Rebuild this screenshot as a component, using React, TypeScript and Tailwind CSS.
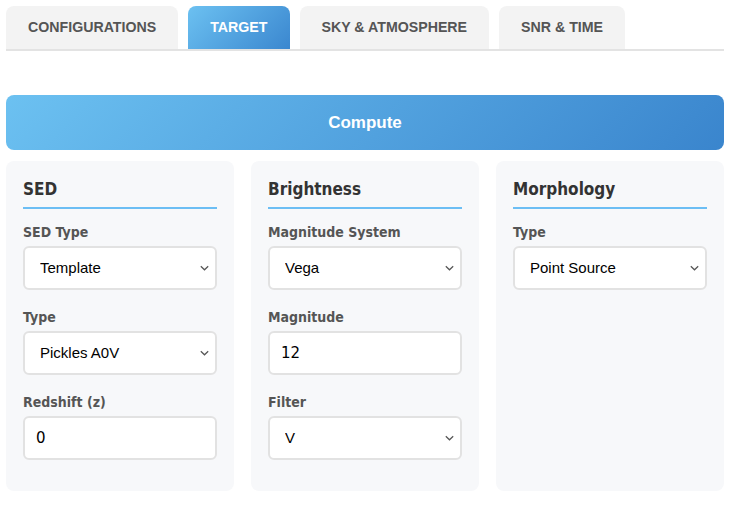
import { useState } from "react";

const TABS = ["CONFIGURATIONS", "TARGET", "SKY & ATMOSPHERE", "SNR & TIME"];

const headFont = {
  fontFamily: '"DejaVu Sans Condensed", "DejaVu Sans", Verdana, sans-serif',
};

function Chevron() {
  return (
    <svg
      className="pointer-events-none absolute right-[8px] top-1/2 -translate-y-1/2"
      width="9"
      height="6"
      viewBox="0 0 9 6"
      fill="none"
    >
      <path d="M0.8 1.2 L4.5 4.8 L8.2 1.2" stroke="#555" strokeWidth="1.2" />
    </svg>
  );
}

function SelectField({ label, value, options }: { label: string; value: string; options: string[] }) {
  const [v, setV] = useState(value);
  return (
    <div className="flex flex-col">
      <label className="mb-[5px] text-[14px] leading-[17px] font-bold text-[#555]" style={headFont}>
        {label}
      </label>
      <div className="relative">
        <select
          value={v}
          onChange={(e) => setV(e.target.value)}
          className="h-[44px] w-full appearance-none rounded-md border-2 border-[#e2e2e2] bg-white pl-[15px] text-[15px] text-black outline-none font-['Liberation_Sans',Arial,sans-serif]"
        >
          {options.map((o) => (
            <option key={o}>{o}</option>
          ))}
        </select>
        <Chevron />
      </div>
    </div>
  );
}

function InputField({ label, value }: { label: string; value: string }) {
  const [v, setV] = useState(value);
  return (
    <div className="flex flex-col">
      <label className="mb-[5px] text-[14px] leading-[17px] font-bold text-[#555]" style={headFont}>
        {label}
      </label>
      <input
        value={v}
        onChange={(e) => setV(e.target.value)}
        className="h-[44px] w-full rounded-md border-2 border-[#e2e2e2] bg-white px-[11px] text-[15px] text-black outline-none font-['DejaVu_Sans',Verdana,sans-serif]"
      />
    </div>
  );
}

function Card({ title, children }: { title: string; children: React.ReactNode }) {
  return (
    <div className="rounded-lg bg-[#f7f8fa] px-[17px] pt-[17px] pb-[31px]">
      <h3
        className="mb-[15px] border-b-2 border-[#6cbef4] pb-[7px] text-[17px] leading-[22px] font-bold text-[#333]"
        style={headFont}
      >
        {title}
      </h3>
      <div className="flex flex-col gap-[19px]">{children}</div>
    </div>
  );
}

export default function App() {
  const [tab, setTab] = useState("TARGET");

  return (
    <div className="min-h-[525px] bg-white px-[6px] pt-[6px]">
      <div className="flex gap-[10px] border-b-2 border-[#e3e3e3]">
        {TABS.map((t) => (
          <button
            key={t}
            onClick={() => setTab(t)}
            className={
              t === tab
                ? "h-[43px] rounded-t-lg bg-linear-135 from-[#6cc1f1] to-[#3b87cf] px-[22px] text-[14.2px] font-bold text-white font-['Liberation_Sans',Arial,sans-serif]"
                : "h-[43px] rounded-t-lg bg-[#f3f3f3] px-[22px] text-[14.2px] font-bold text-[#555] font-['Liberation_Sans',Arial,sans-serif]"
            }
          >
            {t}
          </button>
        ))}
      </div>

      <button className="mt-[44px] h-[55px] w-full rounded-lg bg-linear-135 from-[#6cc1f1] to-[#3a85cd] text-[17px] font-bold text-white font-['Liberation_Sans',Arial,sans-serif]">
        Compute
      </button>

      <div className="mt-[11px] grid grid-cols-3 gap-[17px]">
        <Card title="SED">
          <SelectField label="SED Type" value="Template" options={["Template", "Blackbody", "Power Law"]} />
          <SelectField label="Type" value="Pickles A0V" options={["Pickles A0V", "Pickles G2V", "Pickles M5V"]} />
          <InputField label="Redshift (z)" value="0" />
        </Card>
        <Card title="Brightness">
          <SelectField label="Magnitude System" value="Vega" options={["Vega", "AB"]} />
          <InputField label="Magnitude" value="12" />
          <SelectField label="Filter" value="V" options={["U", "B", "V", "R", "I"]} />
        </Card>
        <Card title="Morphology">
          <SelectField label="Type" value="Point Source" options={["Point Source", "Extended"]} />
        </Card>
      </div>
    </div>
  );
}
